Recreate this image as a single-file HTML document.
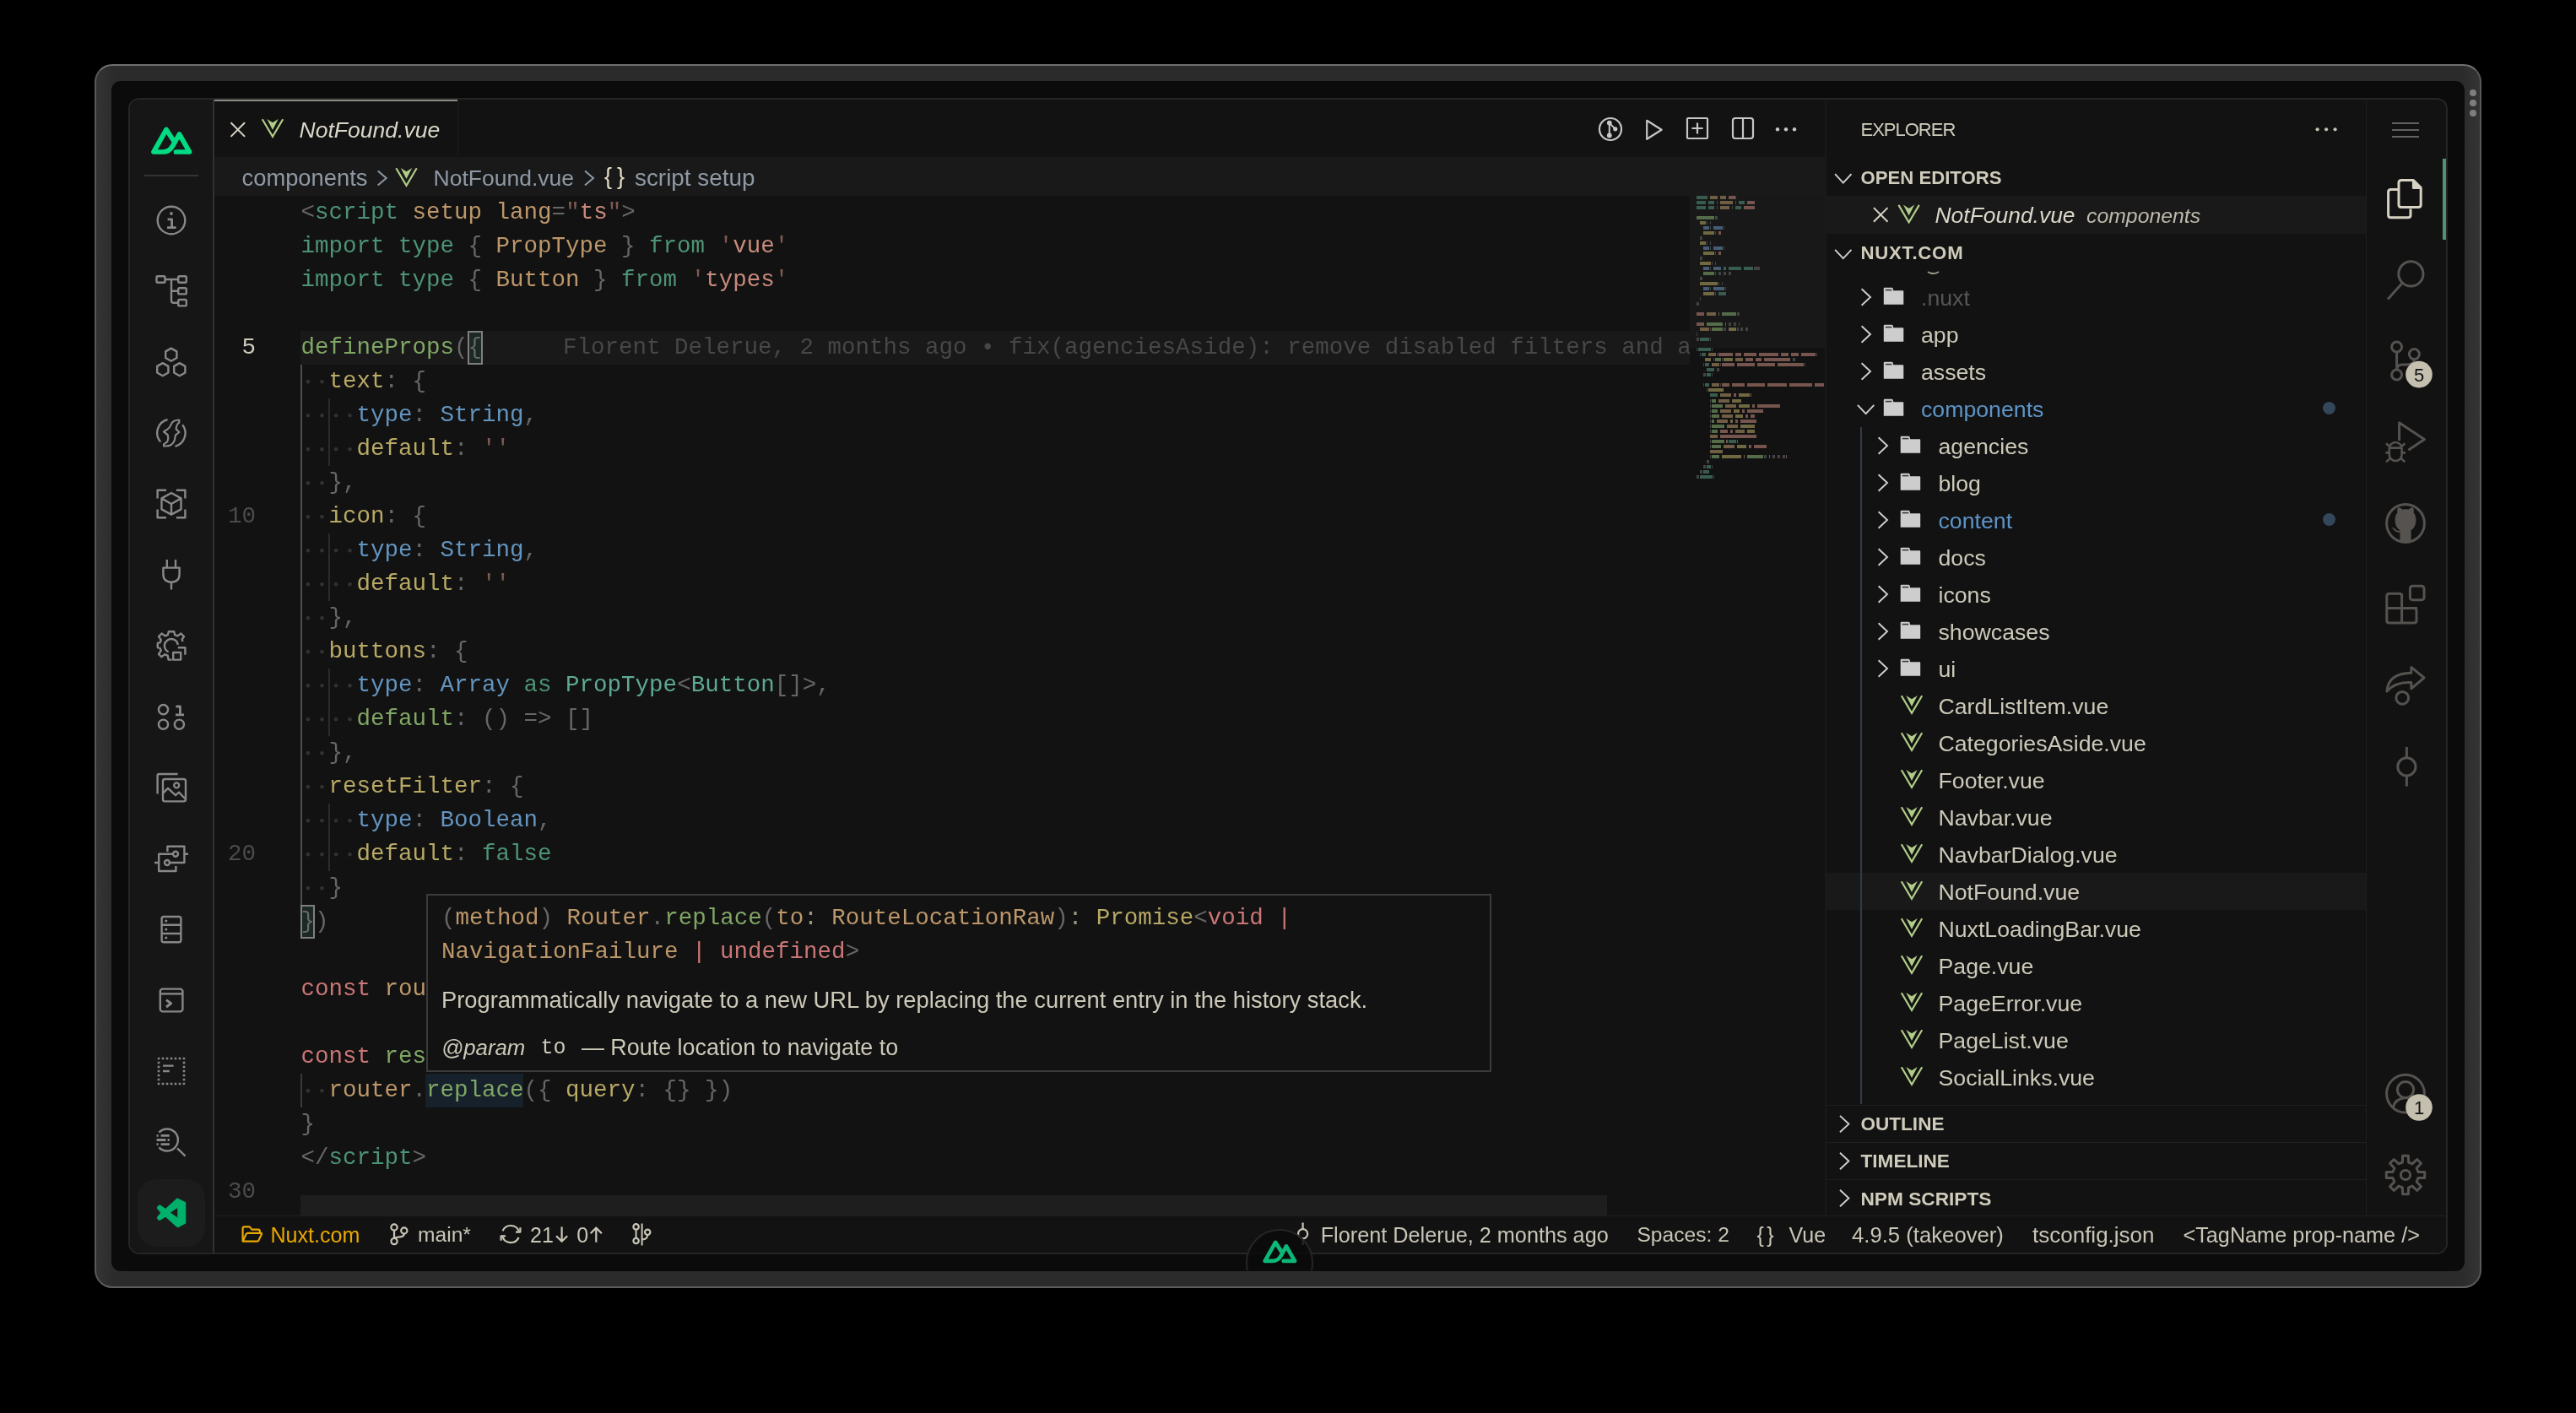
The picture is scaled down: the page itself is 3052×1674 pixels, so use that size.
<!DOCTYPE html><html><head><meta charset="utf-8"><title>NotFound.vue</title><style>
*{box-sizing:border-box;margin:0;padding:0}
html,body{width:3052px;height:1674px;background:#000;overflow:hidden}
body{position:relative;font-family:"Liberation Sans",sans-serif;color:#cdc9b9}
.abs{position:absolute}
.t{position:absolute;white-space:pre;line-height:40px;height:40px}
.m{font-family:"Liberation Mono",monospace;font-size:27.5px}
#bezel{position:absolute;left:112px;top:76px;width:2828px;height:1450px;border-radius:21px;border:2px solid #585858;border-top-color:#707070;border-bottom-color:#5e5e5e;
 background:linear-gradient(90deg,#343434 0,#2b2b2b 22px,#2b2b2b 2802px,#343434 2824px)}
#screen{position:absolute;left:132px;top:96px;width:2788px;height:1410px;border-radius:11px;background:#0b0b0b;overflow:hidden}
#win{position:absolute;left:152px;top:116px;width:2748px;height:1370px;border-radius:13px;background:#121212;overflow:hidden;border:2px solid #252525}
#pg{position:absolute;left:-154px;top:-118px;width:3052px;height:1674px;will-change:transform}
.cl{position:absolute;left:356.5px;height:40px;line-height:40px;white-space:pre;font-family:"Liberation Mono",monospace;font-size:27.5px}
.ln{position:absolute;left:254px;width:49px;text-align:right;height:40px;line-height:40px;font-family:"Liberation Mono",monospace;font-size:27.5px;color:#4a4a4a}
.d{display:inline-block;width:16.5px;height:40px;vertical-align:top;background:radial-gradient(circle at 50% 50.5%,#313131 0,#313131 1.9px,rgba(49,49,49,0) 2.7px)}
.row{position:absolute;left:2164px;width:639px;height:44px}
.rt{position:absolute;white-space:pre;height:44px;line-height:44px;font-size:26.7px;color:#cdc9b9;margin-top:1px}
.hd{position:absolute;white-space:pre;height:44px;line-height:44px;font-size:22.4px;font-weight:bold;color:#d0ccbc}
.sb{position:absolute;white-space:pre;top:1441px;height:44px;line-height:44px;color:#c9c5b6}
</style></head><body>
<div id="bezel"></div><div id="screen"></div>
<div class="abs" style="left:2926px;top:106px;width:8px;height:8px;border-radius:4px;background:#7d7d7d"></div>
<div class="abs" style="left:2926px;top:118px;width:8px;height:8px;border-radius:4px;background:#7d7d7d"></div>
<div class="abs" style="left:2926px;top:130px;width:8px;height:8px;border-radius:4px;background:#7d7d7d"></div>
<div id="win"><div id="pg">
<div class="abs" style="left:152px;top:116px;width:100px;height:1370px;background:#161616"></div>
<div class="abs" style="left:252px;top:116px;width:2px;height:1370px;background:#2f3133"></div>
<div class="abs" style="left:171px;top:207px;width:64px;height:2px;background:#333"></div>
<div class="abs" style="left:163px;top:1397px;width:80px;height:80px;border-radius:22px;background:#1c1c1c"></div>
<div class="abs" style="left:254px;top:118px;width:289px;height:2px;background:#8b8b83"></div>
<div class="abs" style="left:542px;top:118px;width:1px;height:68px;background:#1d1d1d"></div>
<div class="t" style="left:354.5px;top:134px;font-size:26.55px;font-style:italic;color:#dad6c8">NotFound.vue</div>
<div class="abs" style="left:254px;top:186px;width:1909px;height:46px;background:#191919"></div>
<div class="t" style="left:286.5px;top:191px;font-size:27.35px;color:#8f99a4">components</div>
<div class="t" style="left:513.5px;top:191px;font-size:26.5px;color:#8f99a4">NotFound.vue</div>
<div class="t" style="left:716px;top:189px;font-size:27px;color:#e2dcc4;letter-spacing:6px">{}</div>
<div class="t" style="left:752px;top:191px;font-size:27.87px;color:#8f99a4">script setup</div>
<div class="abs" style="left:356px;top:392px;width:1646px;height:40px;background:#191919"></div>
<div class="abs" style="left:504px;top:1272px;width:116px;height:40px;background:#16212b"></div>
<div class="abs" style="left:356px;top:432px;width:2px;height:640px;background:#4e4e4e"></div>
<div class="abs" style="left:356px;top:1272px;width:2px;height:40px;background:#3a3a3a"></div>
<div class="abs" style="left:389px;top:472px;width:2px;height:80px;background:#2b2b2b"></div>
<div class="abs" style="left:389px;top:632px;width:2px;height:80px;background:#2b2b2b"></div>
<div class="abs" style="left:389px;top:792px;width:2px;height:80px;background:#2b2b2b"></div>
<div class="abs" style="left:389px;top:952px;width:2px;height:80px;background:#2b2b2b"></div>
<div class="abs" style="left:554px;top:392px;width:18px;height:40px;background:#1b2824;border:2px solid #7f7f7f"></div>
<div class="abs" style="left:356px;top:1072px;width:17px;height:40px;background:#1b2824;border:2px solid #7f7f7f"></div>
<div class="cl" style="top:232px"><span style="color:#666666">&lt;</span><span style="color:#4d9375">script</span> <span style="color:#bd976a">setup</span> <span style="color:#bd976a">lang</span><span style="color:#666666">=</span><span style="color:#7d5a52">"</span><span style="color:#c98a7d">ts</span><span style="color:#7d5a52">"</span><span style="color:#666666">&gt;</span></div>
<div class="cl" style="top:272px"><span style="color:#4d9375">import type</span><span style="color:#666666"> { </span><span style="color:#bd976a">PropType</span><span style="color:#666666"> } </span><span style="color:#4d9375">from</span> <span style="color:#7d5a52">'</span><span style="color:#c98a7d">vue</span><span style="color:#7d5a52">'</span></div>
<div class="cl" style="top:312px"><span style="color:#4d9375">import type</span><span style="color:#666666"> { </span><span style="color:#bd976a">Button</span><span style="color:#666666"> } </span><span style="color:#4d9375">from</span> <span style="color:#7d5a52">'</span><span style="color:#c98a7d">types</span><span style="color:#7d5a52">'</span></div>
<div class="cl" style="top:392px"><span style="color:#80a665">defineProps</span><span style="color:#666666">({</span></div>
<div class="cl" style="top:432px"><span class="d"></span><span class="d"></span><span style="color:#b8a965">text</span><span style="color:#666666">: {</span></div>
<div class="cl" style="top:472px"><span class="d"></span><span class="d"></span><span class="d"></span><span class="d"></span><span style="color:#6394bf">type</span><span style="color:#666666">: </span><span style="color:#6394bf">String</span><span style="color:#666666">,</span></div>
<div class="cl" style="top:512px"><span class="d"></span><span class="d"></span><span class="d"></span><span class="d"></span><span style="color:#b8a965">default</span><span style="color:#666666">: </span><span style="color:#7d5a52">''</span></div>
<div class="cl" style="top:552px"><span class="d"></span><span class="d"></span><span style="color:#666666">},</span></div>
<div class="cl" style="top:592px"><span class="d"></span><span class="d"></span><span style="color:#b8a965">icon</span><span style="color:#666666">: {</span></div>
<div class="cl" style="top:632px"><span class="d"></span><span class="d"></span><span class="d"></span><span class="d"></span><span style="color:#6394bf">type</span><span style="color:#666666">: </span><span style="color:#6394bf">String</span><span style="color:#666666">,</span></div>
<div class="cl" style="top:672px"><span class="d"></span><span class="d"></span><span class="d"></span><span class="d"></span><span style="color:#b8a965">default</span><span style="color:#666666">: </span><span style="color:#7d5a52">''</span></div>
<div class="cl" style="top:712px"><span class="d"></span><span class="d"></span><span style="color:#666666">},</span></div>
<div class="cl" style="top:752px"><span class="d"></span><span class="d"></span><span style="color:#b8a965">buttons</span><span style="color:#666666">: {</span></div>
<div class="cl" style="top:792px"><span class="d"></span><span class="d"></span><span class="d"></span><span class="d"></span><span style="color:#6394bf">type</span><span style="color:#666666">: </span><span style="color:#6394bf">Array</span> <span style="color:#4d9375">as</span> <span style="color:#5da994">PropType</span><span style="color:#666666">&lt;</span><span style="color:#5da994">Button</span><span style="color:#666666">[]&gt;,</span></div>
<div class="cl" style="top:832px"><span class="d"></span><span class="d"></span><span class="d"></span><span class="d"></span><span style="color:#80a665">default</span><span style="color:#666666">: () =&gt; []</span></div>
<div class="cl" style="top:872px"><span class="d"></span><span class="d"></span><span style="color:#666666">},</span></div>
<div class="cl" style="top:912px"><span class="d"></span><span class="d"></span><span style="color:#b8a965">resetFilter</span><span style="color:#666666">: {</span></div>
<div class="cl" style="top:952px"><span class="d"></span><span class="d"></span><span class="d"></span><span class="d"></span><span style="color:#6394bf">type</span><span style="color:#666666">: </span><span style="color:#6394bf">Boolean</span><span style="color:#666666">,</span></div>
<div class="cl" style="top:992px"><span class="d"></span><span class="d"></span><span class="d"></span><span class="d"></span><span style="color:#b8a965">default</span><span style="color:#666666">: </span><span style="color:#4d9375">false</span></div>
<div class="cl" style="top:1032px"><span class="d"></span><span class="d"></span><span style="color:#666666">}</span></div>
<div class="cl" style="top:1072px"><span style="color:#666666">})</span></div>
<div class="cl" style="top:1152px"><span style="color:#cb7676">const</span> <span style="color:#bd976a">router</span><span style="color:#666666"> = </span><span style="color:#80a665">useRouter</span><span style="color:#666666">()</span></div>
<div class="cl" style="top:1232px"><span style="color:#cb7676">const</span> <span style="color:#80a665">resetFilter</span><span style="color:#666666"> = () =&gt; {</span></div>
<div class="cl" style="top:1272px"><span class="d"></span><span class="d"></span><span style="color:#bd976a">router</span><span style="color:#666666">.</span><span style="color:#80a665">replace</span><span style="color:#666666">({ </span><span style="color:#b8a965">query</span><span style="color:#666666">: {} })</span></div>
<div class="cl" style="top:1312px"><span style="color:#666666">}</span></div>
<div class="cl" style="top:1352px"><span style="color:#666666">&lt;/</span><span style="color:#4d9375">script</span><span style="color:#666666">&gt;</span></div>
<div class="cl" style="top:392px;left:667px;width:1335px;overflow:hidden;color:#474747">Florent Delerue, 2 months ago • fix(agenciesAside): remove disabled filters and agencies</div>
<div class="ln" style="top:392px;color:#cfcbbc">5</div>
<div class="ln" style="top:592px;color:#4b4b4b">10</div>
<div class="ln" style="top:992px;color:#4b4b4b">20</div>
<div class="ln" style="top:1392px;color:#4b4b4b">30</div>
<div class="abs" style="left:356px;top:1416px;width:1548px;height:25px;background:#1e1e1e"></div>
<div class="abs" style="left:2002px;top:232px;width:161px;height:1209px;background:#121212"></div>
<div class="abs" style="left:2002px;top:232px;width:161px;height:180px;background:#181818"></div>
<div class="abs" style="left:2010.1px;top:231.6px;width:13.3px;height:4px;background:#385c4e"></div>
<div class="abs" style="left:2025.8px;top:231.6px;width:9.3px;height:4px;background:#705e44"></div>
<div class="abs" style="left:2037.6px;top:231.6px;width:7.8px;height:4px;background:#705e44"></div>
<div class="abs" style="left:2047.5px;top:231.6px;width:8.3px;height:4px;background:#75554e"></div>
<div class="abs" style="left:2056.4px;top:231.6px;width:1.0px;height:4px;background:#434343"></div>
<div class="abs" style="left:2010.1px;top:237.6px;width:11.2px;height:4px;background:#385c4e"></div>
<div class="abs" style="left:2024.0px;top:237.6px;width:7.3px;height:4px;background:#385c4e"></div>
<div class="abs" style="left:2033.9px;top:237.6px;width:1.0px;height:4px;background:#434343"></div>
<div class="abs" style="left:2037.9px;top:237.6px;width:15.6px;height:4px;background:#705e44"></div>
<div class="abs" style="left:2056.2px;top:237.6px;width:1.0px;height:4px;background:#434343"></div>
<div class="abs" style="left:2059.8px;top:237.6px;width:7.5px;height:4px;background:#385c4e"></div>
<div class="abs" style="left:2069.8px;top:237.6px;width:9.6px;height:4px;background:#75554e"></div>
<div class="abs" style="left:2010.1px;top:243.7px;width:11.2px;height:4px;background:#385c4e"></div>
<div class="abs" style="left:2024.0px;top:243.7px;width:7.3px;height:4px;background:#385c4e"></div>
<div class="abs" style="left:2033.9px;top:243.7px;width:1.0px;height:4px;background:#434343"></div>
<div class="abs" style="left:2037.9px;top:243.7px;width:11.4px;height:4px;background:#705e44"></div>
<div class="abs" style="left:2052.0px;top:243.7px;width:1.0px;height:4px;background:#434343"></div>
<div class="abs" style="left:2055.9px;top:243.7px;width:7.3px;height:4px;background:#385c4e"></div>
<div class="abs" style="left:2065.9px;top:243.7px;width:13.5px;height:4px;background:#75554e"></div>
<div class="abs" style="left:2010.1px;top:255.7px;width:21.1px;height:4px;background:#546c48"></div>
<div class="abs" style="left:2031.8px;top:255.7px;width:3.1px;height:4px;background:#434343"></div>
<div class="abs" style="left:2014.0px;top:261.7px;width:7.3px;height:4px;background:#706840"></div>
<div class="abs" style="left:2021.9px;top:261.7px;width:1.5px;height:4px;background:#434343"></div>
<div class="abs" style="left:2025.8px;top:261.7px;width:1.5px;height:4px;background:#434343"></div>
<div class="abs" style="left:2018.0px;top:267.7px;width:7.3px;height:4px;background:#465c74"></div>
<div class="abs" style="left:2025.8px;top:267.7px;width:1.5px;height:4px;background:#434343"></div>
<div class="abs" style="left:2029.7px;top:267.7px;width:11.7px;height:4px;background:#465c74"></div>
<div class="abs" style="left:2042.0px;top:267.7px;width:1.2px;height:4px;background:#434343"></div>
<div class="abs" style="left:2018.0px;top:273.8px;width:13.3px;height:4px;background:#706840"></div>
<div class="abs" style="left:2031.8px;top:273.8px;width:1.5px;height:4px;background:#434343"></div>
<div class="abs" style="left:2035.8px;top:273.8px;width:3.6px;height:4px;background:#75554e"></div>
<div class="abs" style="left:2014.0px;top:279.8px;width:3.3px;height:4px;background:#434343"></div>
<div class="abs" style="left:2014.0px;top:285.8px;width:7.3px;height:4px;background:#706840"></div>
<div class="abs" style="left:2021.9px;top:285.8px;width:1.5px;height:4px;background:#434343"></div>
<div class="abs" style="left:2025.8px;top:285.8px;width:1.5px;height:4px;background:#434343"></div>
<div class="abs" style="left:2018.0px;top:291.8px;width:7.3px;height:4px;background:#465c74"></div>
<div class="abs" style="left:2025.8px;top:291.8px;width:1.5px;height:4px;background:#434343"></div>
<div class="abs" style="left:2029.7px;top:291.8px;width:11.7px;height:4px;background:#465c74"></div>
<div class="abs" style="left:2042.0px;top:291.8px;width:1.2px;height:4px;background:#434343"></div>
<div class="abs" style="left:2018.0px;top:297.8px;width:13.3px;height:4px;background:#706840"></div>
<div class="abs" style="left:2031.8px;top:297.8px;width:1.5px;height:4px;background:#434343"></div>
<div class="abs" style="left:2035.8px;top:297.8px;width:3.6px;height:4px;background:#75554e"></div>
<div class="abs" style="left:2014.0px;top:303.9px;width:3.3px;height:4px;background:#434343"></div>
<div class="abs" style="left:2014.0px;top:309.9px;width:13.3px;height:4px;background:#706840"></div>
<div class="abs" style="left:2027.9px;top:309.9px;width:1.5px;height:4px;background:#434343"></div>
<div class="abs" style="left:2031.8px;top:309.9px;width:1.5px;height:4px;background:#434343"></div>
<div class="abs" style="left:2018.0px;top:315.9px;width:7.3px;height:4px;background:#465c74"></div>
<div class="abs" style="left:2025.8px;top:315.9px;width:1.5px;height:4px;background:#434343"></div>
<div class="abs" style="left:2029.7px;top:315.9px;width:9.6px;height:4px;background:#465c74"></div>
<div class="abs" style="left:2042.0px;top:315.9px;width:3.3px;height:4px;background:#385c4e"></div>
<div class="abs" style="left:2047.8px;top:315.9px;width:15.6px;height:4px;background:#385c4e"></div>
<div class="abs" style="left:2065.9px;top:315.9px;width:11.4px;height:4px;background:#385c4e"></div>
<div class="abs" style="left:2077.9px;top:315.9px;width:7.5px;height:4px;background:#434343"></div>
<div class="abs" style="left:2018.0px;top:321.9px;width:13.3px;height:4px;background:#546c48"></div>
<div class="abs" style="left:2031.8px;top:321.9px;width:1.5px;height:4px;background:#434343"></div>
<div class="abs" style="left:2035.8px;top:321.9px;width:3.6px;height:4px;background:#434343"></div>
<div class="abs" style="left:2042.0px;top:321.9px;width:3.3px;height:4px;background:#434343"></div>
<div class="abs" style="left:2047.8px;top:321.9px;width:3.6px;height:4px;background:#434343"></div>
<div class="abs" style="left:2014.0px;top:327.9px;width:3.3px;height:4px;background:#434343"></div>
<div class="abs" style="left:2014.0px;top:334.0px;width:21.1px;height:4px;background:#706840"></div>
<div class="abs" style="left:2035.8px;top:334.0px;width:1.5px;height:4px;background:#434343"></div>
<div class="abs" style="left:2039.9px;top:334.0px;width:1.5px;height:4px;background:#434343"></div>
<div class="abs" style="left:2018.0px;top:340.0px;width:7.3px;height:4px;background:#465c74"></div>
<div class="abs" style="left:2025.8px;top:340.0px;width:1.5px;height:4px;background:#434343"></div>
<div class="abs" style="left:2029.7px;top:340.0px;width:13.5px;height:4px;background:#465c74"></div>
<div class="abs" style="left:2043.9px;top:340.0px;width:1.5px;height:4px;background:#434343"></div>
<div class="abs" style="left:2018.0px;top:346.0px;width:13.3px;height:4px;background:#706840"></div>
<div class="abs" style="left:2031.8px;top:346.0px;width:1.5px;height:4px;background:#434343"></div>
<div class="abs" style="left:2035.8px;top:346.0px;width:9.6px;height:4px;background:#385c4e"></div>
<div class="abs" style="left:2014.0px;top:352.0px;width:1.2px;height:4px;background:#434343"></div>
<div class="abs" style="left:2010.1px;top:358.1px;width:3.3px;height:4px;background:#434343"></div>
<div class="abs" style="left:2010.1px;top:370.1px;width:9.1px;height:4px;background:#75554e"></div>
<div class="abs" style="left:2021.9px;top:370.1px;width:11.4px;height:4px;background:#705e44"></div>
<div class="abs" style="left:2035.8px;top:370.1px;width:1.5px;height:4px;background:#75554e"></div>
<div class="abs" style="left:2039.9px;top:370.1px;width:17.5px;height:4px;background:#546c48"></div>
<div class="abs" style="left:2058.0px;top:370.1px;width:3.3px;height:4px;background:#434343"></div>
<div class="abs" style="left:2010.1px;top:382.1px;width:9.1px;height:4px;background:#75554e"></div>
<div class="abs" style="left:2021.9px;top:382.1px;width:19.6px;height:4px;background:#546c48"></div>
<div class="abs" style="left:2043.9px;top:382.1px;width:1.5px;height:4px;background:#75554e"></div>
<div class="abs" style="left:2047.8px;top:382.1px;width:3.6px;height:4px;background:#434343"></div>
<div class="abs" style="left:2053.8px;top:382.1px;width:3.6px;height:4px;background:#434343"></div>
<div class="abs" style="left:2059.8px;top:382.1px;width:1.5px;height:4px;background:#434343"></div>
<div class="abs" style="left:2014.0px;top:388.2px;width:11.2px;height:4px;background:#705e44"></div>
<div class="abs" style="left:2025.8px;top:388.2px;width:1.5px;height:4px;background:#434343"></div>
<div class="abs" style="left:2027.9px;top:388.2px;width:13.5px;height:4px;background:#546c48"></div>
<div class="abs" style="left:2042.0px;top:388.2px;width:3.3px;height:4px;background:#434343"></div>
<div class="abs" style="left:2047.8px;top:388.2px;width:9.6px;height:4px;background:#706840"></div>
<div class="abs" style="left:2058.0px;top:388.2px;width:1.5px;height:4px;background:#434343"></div>
<div class="abs" style="left:2061.9px;top:388.2px;width:3.3px;height:4px;background:#434343"></div>
<div class="abs" style="left:2068.0px;top:388.2px;width:3.3px;height:4px;background:#434343"></div>
<div class="abs" style="left:2010.1px;top:394.2px;width:1.2px;height:4px;background:#434343"></div>
<div class="abs" style="left:2010.1px;top:400.2px;width:3.3px;height:4px;background:#434343"></div>
<div class="abs" style="left:2014.0px;top:400.2px;width:11.2px;height:4px;background:#385c4e"></div>
<div class="abs" style="left:2025.8px;top:400.2px;width:1.5px;height:4px;background:#434343"></div>
<div class="abs" style="left:2010.1px;top:412.2px;width:1.2px;height:4px;background:#434343"></div>
<div class="abs" style="left:2011.9px;top:412.2px;width:15.4px;height:4px;background:#385c4e"></div>
<div class="abs" style="left:2027.9px;top:412.2px;width:1.2px;height:4px;background:#434343"></div>
<div class="abs" style="left:2014.0px;top:418.3px;width:1.2px;height:4px;background:#434343"></div>
<div class="abs" style="left:2015.9px;top:418.3px;width:5.4px;height:4px;background:#385c4e"></div>
<div class="abs" style="left:2024.0px;top:418.3px;width:9.3px;height:4px;background:#705e44"></div>
<div class="abs" style="left:2033.9px;top:418.3px;width:1.2px;height:4px;background:#434343"></div>
<div class="abs" style="left:2035.8px;top:418.3px;width:17.7px;height:4px;background:#75554e"></div>
<div class="abs" style="left:2055.9px;top:418.3px;width:7.3px;height:4px;background:#75554e"></div>
<div class="abs" style="left:2065.9px;top:418.3px;width:15.4px;height:4px;background:#75554e"></div>
<div class="abs" style="left:2083.9px;top:418.3px;width:23.5px;height:4px;background:#75554e"></div>
<div class="abs" style="left:2110.1px;top:418.3px;width:9.3px;height:4px;background:#75554e"></div>
<div class="abs" style="left:2122.1px;top:418.3px;width:9.1px;height:4px;background:#75554e"></div>
<div class="abs" style="left:2133.9px;top:418.3px;width:17.5px;height:4px;background:#75554e"></div>
<div class="abs" style="left:2152.0px;top:418.3px;width:1.2px;height:4px;background:#434343"></div>
<div class="abs" style="left:2019.8px;top:424.3px;width:7.5px;height:4px;background:#706840"></div>
<div class="abs" style="left:2029.7px;top:424.3px;width:1.5px;height:4px;background:#434343"></div>
<div class="abs" style="left:2031.8px;top:424.3px;width:7.5px;height:4px;background:#546c48"></div>
<div class="abs" style="left:2039.9px;top:424.3px;width:1.5px;height:4px;background:#434343"></div>
<div class="abs" style="left:2042.0px;top:424.3px;width:11.4px;height:4px;background:#706840"></div>
<div class="abs" style="left:2055.9px;top:424.3px;width:9.3px;height:4px;background:#705e44"></div>
<div class="abs" style="left:2068.0px;top:424.3px;width:9.3px;height:4px;background:#75554e"></div>
<div class="abs" style="left:2080.0px;top:424.3px;width:7.3px;height:4px;background:#75554e"></div>
<div class="abs" style="left:2089.9px;top:424.3px;width:31.6px;height:4px;background:#75554e"></div>
<div class="abs" style="left:2124.0px;top:424.3px;width:3.3px;height:4px;background:#434343"></div>
<div class="abs" style="left:2018.0px;top:430.3px;width:1.2px;height:4px;background:#434343"></div>
<div class="abs" style="left:2019.8px;top:430.3px;width:5.4px;height:4px;background:#385c4e"></div>
<div class="abs" style="left:2027.9px;top:430.3px;width:9.3px;height:4px;background:#705e44"></div>
<div class="abs" style="left:2037.9px;top:430.3px;width:1.5px;height:4px;background:#434343"></div>
<div class="abs" style="left:2039.9px;top:430.3px;width:15.4px;height:4px;background:#75554e"></div>
<div class="abs" style="left:2058.0px;top:430.3px;width:21.4px;height:4px;background:#75554e"></div>
<div class="abs" style="left:2081.8px;top:430.3px;width:21.7px;height:4px;background:#75554e"></div>
<div class="abs" style="left:2105.9px;top:430.3px;width:31.3px;height:4px;background:#75554e"></div>
<div class="abs" style="left:2137.9px;top:430.3px;width:1.2px;height:4px;background:#434343"></div>
<div class="abs" style="left:2021.9px;top:436.3px;width:9.3px;height:4px;background:#385c4e"></div>
<div class="abs" style="left:2033.9px;top:436.3px;width:3.3px;height:4px;background:#434343"></div>
<div class="abs" style="left:2018.0px;top:442.3px;width:3.3px;height:4px;background:#434343"></div>
<div class="abs" style="left:2021.9px;top:442.3px;width:5.4px;height:4px;background:#385c4e"></div>
<div class="abs" style="left:2027.9px;top:442.3px;width:1.2px;height:4px;background:#434343"></div>
<div class="abs" style="left:2018.0px;top:454.4px;width:1.2px;height:4px;background:#434343"></div>
<div class="abs" style="left:2019.8px;top:454.4px;width:5.4px;height:4px;background:#385c4e"></div>
<div class="abs" style="left:2027.9px;top:454.4px;width:9.3px;height:4px;background:#705e44"></div>
<div class="abs" style="left:2037.9px;top:454.4px;width:1.5px;height:4px;background:#434343"></div>
<div class="abs" style="left:2039.9px;top:454.4px;width:9.3px;height:4px;background:#75554e"></div>
<div class="abs" style="left:2052.0px;top:454.4px;width:15.4px;height:4px;background:#75554e"></div>
<div class="abs" style="left:2069.8px;top:454.4px;width:21.7px;height:4px;background:#75554e"></div>
<div class="abs" style="left:2093.9px;top:454.4px;width:23.5px;height:4px;background:#75554e"></div>
<div class="abs" style="left:2120.1px;top:454.4px;width:27.1px;height:4px;background:#75554e"></div>
<div class="abs" style="left:2149.9px;top:454.4px;width:11.4px;height:4px;background:#75554e"></div>
<div class="abs" style="left:2021.9px;top:460.4px;width:1.5px;height:4px;background:#434343"></div>
<div class="abs" style="left:2024.0px;top:460.4px;width:17.5px;height:4px;background:#706840"></div>
<div class="abs" style="left:2025.8px;top:466.4px;width:9.3px;height:4px;background:#385c4e"></div>
<div class="abs" style="left:2037.9px;top:466.4px;width:13.5px;height:4px;background:#705e44"></div>
<div class="abs" style="left:2053.8px;top:466.4px;width:3.6px;height:4px;background:#75554e"></div>
<div class="abs" style="left:2059.8px;top:466.4px;width:13.5px;height:4px;background:#706840"></div>
<div class="abs" style="left:2074.0px;top:466.4px;width:1.2px;height:4px;background:#75554e"></div>
<div class="abs" style="left:2025.8px;top:472.5px;width:1.5px;height:4px;background:#434343"></div>
<div class="abs" style="left:2027.9px;top:472.5px;width:5.4px;height:4px;background:#546c48"></div>
<div class="abs" style="left:2035.8px;top:472.5px;width:13.5px;height:4px;background:#705e44"></div>
<div class="abs" style="left:2052.0px;top:472.5px;width:11.2px;height:4px;background:#706840"></div>
<div class="abs" style="left:2025.8px;top:478.5px;width:1.5px;height:4px;background:#434343"></div>
<div class="abs" style="left:2027.9px;top:478.5px;width:13.5px;height:4px;background:#546c48"></div>
<div class="abs" style="left:2043.9px;top:478.5px;width:13.5px;height:4px;background:#705e44"></div>
<div class="abs" style="left:2059.8px;top:478.5px;width:13.5px;height:4px;background:#706840"></div>
<div class="abs" style="left:2075.8px;top:478.5px;width:3.6px;height:4px;background:#75554e"></div>
<div class="abs" style="left:2081.8px;top:478.5px;width:27.7px;height:4px;background:#75554e"></div>
<div class="abs" style="left:2025.8px;top:484.5px;width:1.5px;height:4px;background:#434343"></div>
<div class="abs" style="left:2027.9px;top:484.5px;width:7.3px;height:4px;background:#546c48"></div>
<div class="abs" style="left:2037.9px;top:484.5px;width:13.5px;height:4px;background:#705e44"></div>
<div class="abs" style="left:2053.8px;top:484.5px;width:7.5px;height:4px;background:#706840"></div>
<div class="abs" style="left:2063.8px;top:484.5px;width:3.6px;height:4px;background:#75554e"></div>
<div class="abs" style="left:2069.8px;top:484.5px;width:19.6px;height:4px;background:#75554e"></div>
<div class="abs" style="left:2025.8px;top:490.5px;width:1.5px;height:4px;background:#434343"></div>
<div class="abs" style="left:2027.9px;top:490.5px;width:9.3px;height:4px;background:#546c48"></div>
<div class="abs" style="left:2039.9px;top:490.5px;width:13.5px;height:4px;background:#705e44"></div>
<div class="abs" style="left:2055.9px;top:490.5px;width:9.3px;height:4px;background:#706840"></div>
<div class="abs" style="left:2068.0px;top:490.5px;width:3.3px;height:4px;background:#75554e"></div>
<div class="abs" style="left:2074.0px;top:490.5px;width:5.4px;height:4px;background:#75554e"></div>
<div class="abs" style="left:2025.8px;top:496.5px;width:1.5px;height:4px;background:#434343"></div>
<div class="abs" style="left:2027.9px;top:496.5px;width:3.3px;height:4px;background:#546c48"></div>
<div class="abs" style="left:2033.9px;top:496.5px;width:13.5px;height:4px;background:#705e44"></div>
<div class="abs" style="left:2049.9px;top:496.5px;width:3.6px;height:4px;background:#706840"></div>
<div class="abs" style="left:2055.9px;top:496.5px;width:3.3px;height:4px;background:#75554e"></div>
<div class="abs" style="left:2061.9px;top:496.5px;width:19.3px;height:4px;background:#75554e"></div>
<div class="abs" style="left:2025.8px;top:502.6px;width:1.5px;height:4px;background:#434343"></div>
<div class="abs" style="left:2027.9px;top:502.6px;width:15.4px;height:4px;background:#546c48"></div>
<div class="abs" style="left:2046.0px;top:502.6px;width:13.3px;height:4px;background:#705e44"></div>
<div class="abs" style="left:2061.9px;top:502.6px;width:17.5px;height:4px;background:#706840"></div>
<div class="abs" style="left:2025.8px;top:508.6px;width:1.5px;height:4px;background:#434343"></div>
<div class="abs" style="left:2027.9px;top:508.6px;width:7.3px;height:4px;background:#546c48"></div>
<div class="abs" style="left:2037.9px;top:508.6px;width:9.6px;height:4px;background:#75554e"></div>
<div class="abs" style="left:2049.9px;top:508.6px;width:3.6px;height:4px;background:#75554e"></div>
<div class="abs" style="left:2055.9px;top:508.6px;width:11.4px;height:4px;background:#705e44"></div>
<div class="abs" style="left:2069.8px;top:508.6px;width:9.6px;height:4px;background:#706840"></div>
<div class="abs" style="left:2025.8px;top:514.6px;width:9.3px;height:4px;background:#705e44"></div>
<div class="abs" style="left:2037.9px;top:514.6px;width:43.4px;height:4px;background:#75554e"></div>
<div class="abs" style="left:2025.8px;top:520.6px;width:1.5px;height:4px;background:#434343"></div>
<div class="abs" style="left:2027.9px;top:520.6px;width:15.4px;height:4px;background:#546c48"></div>
<div class="abs" style="left:2045.4px;top:520.6px;width:1.5px;height:4px;background:#75554e"></div>
<div class="abs" style="left:2048.1px;top:520.6px;width:9.3px;height:4px;background:#385c4e"></div>
<div class="abs" style="left:2058.0px;top:520.6px;width:1.2px;height:4px;background:#75554e"></div>
<div class="abs" style="left:2025.8px;top:526.6px;width:1.5px;height:4px;background:#434343"></div>
<div class="abs" style="left:2027.9px;top:526.6px;width:11.4px;height:4px;background:#546c48"></div>
<div class="abs" style="left:2042.0px;top:526.6px;width:13.3px;height:4px;background:#705e44"></div>
<div class="abs" style="left:2058.0px;top:526.6px;width:11.2px;height:4px;background:#706840"></div>
<div class="abs" style="left:2071.9px;top:526.6px;width:3.3px;height:4px;background:#75554e"></div>
<div class="abs" style="left:2077.9px;top:526.6px;width:15.4px;height:4px;background:#75554e"></div>
<div class="abs" style="left:2025.8px;top:532.7px;width:15.6px;height:4px;background:#705e44"></div>
<div class="abs" style="left:2025.8px;top:538.7px;width:1.5px;height:4px;background:#434343"></div>
<div class="abs" style="left:2027.9px;top:538.7px;width:9.3px;height:4px;background:#546c48"></div>
<div class="abs" style="left:2039.9px;top:538.7px;width:23.5px;height:4px;background:#706840"></div>
<div class="abs" style="left:2065.9px;top:538.7px;width:1.5px;height:4px;background:#75554e"></div>
<div class="abs" style="left:2069.8px;top:538.7px;width:19.6px;height:4px;background:#546c48"></div>
<div class="abs" style="left:2089.9px;top:538.7px;width:3.3px;height:4px;background:#434343"></div>
<div class="abs" style="left:2096.0px;top:538.7px;width:1.2px;height:4px;background:#75554e"></div>
<div class="abs" style="left:2099.9px;top:538.7px;width:3.6px;height:4px;background:#434343"></div>
<div class="abs" style="left:2105.9px;top:538.7px;width:3.6px;height:4px;background:#434343"></div>
<div class="abs" style="left:2111.9px;top:538.7px;width:3.6px;height:4px;background:#434343"></div>
<div class="abs" style="left:2116.1px;top:538.7px;width:1.2px;height:4px;background:#75554e"></div>
<div class="abs" style="left:2021.9px;top:544.7px;width:3.3px;height:4px;background:#434343"></div>
<div class="abs" style="left:2018.0px;top:550.7px;width:3.3px;height:4px;background:#434343"></div>
<div class="abs" style="left:2021.9px;top:550.7px;width:5.4px;height:4px;background:#385c4e"></div>
<div class="abs" style="left:2027.9px;top:550.7px;width:1.2px;height:4px;background:#434343"></div>
<div class="abs" style="left:2014.0px;top:556.7px;width:3.3px;height:4px;background:#434343"></div>
<div class="abs" style="left:2018.0px;top:556.7px;width:7.3px;height:4px;background:#385c4e"></div>
<div class="abs" style="left:2010.1px;top:562.8px;width:3.3px;height:4px;background:#434343"></div>
<div class="abs" style="left:2014.0px;top:562.8px;width:15.1px;height:4px;background:#385c4e"></div>
<div class="abs" style="left:2029.7px;top:562.8px;width:1.5px;height:4px;background:#434343"></div>
<div class="abs" style="left:505px;top:1059px;width:1262px;height:211px;background:#121212;border:2px solid #3b3b3b"></div>
<div class="cl" style="left:523px;top:1068px"><span style="color:#666666">(</span><span style="color:#bd976a">method</span><span style="color:#666666">)</span> <span style="color:#bd976a">Router</span><span style="color:#666666">.</span><span style="color:#80a665">replace</span><span style="color:#666666">(</span><span style="color:#bd976a">to</span><span style="color:#9a9788">:</span> <span style="color:#bd976a">RouteLocationRaw</span><span style="color:#666666">)</span><span style="color:#9a9788">:</span> <span style="color:#b8a965">Promise</span><span style="color:#666666">&lt;</span><span style="color:#cb7676">void</span> <span style="color:#cb7676">|</span></div>
<div class="cl" style="left:523px;top:1107.5px"><span style="color:#bd976a">NavigationFailure</span> <span style="color:#cb7676">|</span> <span style="color:#cb7676">undefined</span><span style="color:#666666">&gt;</span></div>
<div class="t" style="left:523px;top:1165px;font-size:27.34px;color:#cdc9b9">Programmatically navigate to a new URL by replacing the current entry in the history stack.</div>
<div class="t" style="left:523px;top:1221px;font-size:25.8px;color:#cdc9b9;font-style:italic">@param</div>
<div class="t m" style="left:640.5px;top:1222px;font-size:25px;color:#cdc9b9">to</div>
<div class="t" style="left:689px;top:1221px;font-size:26.9px;color:#cdc9b9">— Route location to navigate to</div>
<div class="abs" style="left:2162px;top:118px;width:2px;height:1323px;background:#191919"></div>
<div class="abs" style="left:2164px;top:118px;width:639px;height:1323px;background:#121212"></div>
<div class="t" style="left:2204.5px;top:134px;font-size:22px;letter-spacing:-1px;color:#cfcbbc">EXPLORER</div>
<div class="hd" style="left:2204.5px;top:188.5px;font-size:22.15px">OPEN EDITORS</div>
<div class="abs" style="left:2164px;top:232px;width:639px;height:45px;background:#191919"></div>
<div class="t" style="left:2292.5px;top:234.5px;font-size:26.45px;font-style:italic;color:#dad6c8">NotFound.vue</div>
<div class="t" style="left:2472px;top:236px;font-size:24.8px;font-style:italic;color:#bdb9ab">components</div>
<div class="hd" style="left:2204.5px;top:278px;font-size:22.2px;letter-spacing:0.75px">NUXT.COM</div>
<div class="rt" style="left:2276.0px;top:330px;color:#555">.nuxt</div>
<div class="rt" style="left:2276.0px;top:374px;color:#cdc9b9">app</div>
<div class="rt" style="left:2276.0px;top:418px;color:#cdc9b9">assets</div>
<div class="rt" style="left:2276.0px;top:462px;color:#5d94c7">components</div>
<div class="rt" style="left:2296.5px;top:506px;color:#cdc9b9">agencies</div>
<div class="rt" style="left:2296.5px;top:550px;color:#cdc9b9">blog</div>
<div class="rt" style="left:2296.5px;top:594px;color:#5d94c7">content</div>
<div class="rt" style="left:2296.5px;top:638px;color:#cdc9b9">docs</div>
<div class="rt" style="left:2296.5px;top:682px;color:#cdc9b9">icons</div>
<div class="rt" style="left:2296.5px;top:726px;color:#cdc9b9">showcases</div>
<div class="rt" style="left:2296.5px;top:770px;color:#cdc9b9">ui</div>
<div class="rt" style="left:2296.5px;top:814px;color:#cdc9b9">CardListItem.vue</div>
<div class="rt" style="left:2296.5px;top:858px;color:#cdc9b9">CategoriesAside.vue</div>
<div class="rt" style="left:2296.5px;top:902px;color:#cdc9b9">Footer.vue</div>
<div class="rt" style="left:2296.5px;top:946px;color:#cdc9b9">Navbar.vue</div>
<div class="rt" style="left:2296.5px;top:990px;color:#cdc9b9">NavbarDialog.vue</div>
<div class="abs" style="left:2164px;top:1034px;width:639px;height:44px;background:#191919"></div>
<div class="rt" style="left:2296.5px;top:1034px;color:#cdc9b9">NotFound.vue</div>
<div class="rt" style="left:2296.5px;top:1078px;color:#cdc9b9">NuxtLoadingBar.vue</div>
<div class="rt" style="left:2296.5px;top:1122px;color:#cdc9b9">Page.vue</div>
<div class="rt" style="left:2296.5px;top:1166px;color:#cdc9b9">PageError.vue</div>
<div class="rt" style="left:2296.5px;top:1210px;color:#cdc9b9">PageList.vue</div>
<div class="rt" style="left:2296.5px;top:1254px;color:#cdc9b9">SocialLinks.vue</div>
<div class="abs" style="left:2204px;top:506px;width:2px;height:802px;background:#2f3b49"></div>
<div class="abs" style="left:2752px;top:476px;width:15px;height:15px;border-radius:8px;background:#33465a"></div>
<div class="abs" style="left:2752px;top:608px;width:15px;height:15px;border-radius:8px;background:#33465a"></div>
<div class="abs" style="left:2164px;top:1309px;width:639px;height:1px;background:#1f1f1f"></div>
<div class="hd" style="left:2204.5px;top:1310px;font-size:22.56px">OUTLINE</div>
<div class="abs" style="left:2164px;top:1353px;width:639px;height:1px;background:#1f1f1f"></div>
<div class="hd" style="left:2204.5px;top:1354px;font-size:22.60px">TIMELINE</div>
<div class="abs" style="left:2164px;top:1397px;width:639px;height:1px;background:#1f1f1f"></div>
<div class="hd" style="left:2204.5px;top:1398px;font-size:22.68px">NPM SCRIPTS</div>
<div class="abs" style="left:2803px;top:118px;width:1px;height:1323px;background:#1f1f1f"></div>
<div class="abs" style="left:2894px;top:188px;width:4px;height:96px;background:#4d9375"></div>
<div class="abs" style="left:254px;top:1440px;width:2646px;height:1px;background:#1f1f1f"></div>
<div class="abs" style="left:254px;top:1441px;width:2646px;height:45px;background:#121212"></div>
<div class="sb" style="left:320.5px;font-size:25.10px;color:#e9a800">Nuxt.com</div>
<div class="sb" style="left:495.0px;font-size:24.64px">main*</div>
<div class="sb" style="left:628.0px;font-size:25.00px">21</div>
<div class="sb" style="left:683.3px;font-size:25.00px">0</div>
<div class="sb" style="left:1564.7px;font-size:25.25px">Florent Delerue, 2 months ago</div>
<div class="sb" style="left:1939.4px;font-size:24.62px">Spaces: 2</div>
<div class="sb" style="left:2081.5px;font-size:25.00px;color:#c9c5b6;letter-spacing:3.5px">{}</div>
<div class="sb" style="left:2119.6px;font-size:25.00px">Vue</div>
<div class="sb" style="left:2194.0px;font-size:25.70px">4.9.5 (takeover)</div>
<div class="sb" style="left:2408.0px;font-size:26.00px">tsconfig.json</div>
<div class="sb" style="left:2586.5px;font-size:25.23px">&lt;TagName prop-name /&gt;</div>
</div></div>
<svg class="abs" style="left:0;top:0" width="3052" height="1674" viewBox="0 0 3052 1674">
<path d="M205.5 166.5 L197.0 153.5 L182.0 180.0 L193.0 180.0 Q200.5 180.0 204.5 173.0 L212.5 159.0 L224.5 180.0 L208.5 180.0" fill="none" stroke="#00dc82" stroke-width="5.7" stroke-linejoin="round" stroke-linecap="round"/>
<g fill="none" stroke="#888888" stroke-width="2.4" stroke-linecap="butt" stroke-linejoin="round">
<circle cx="203" cy="261" r="16.3"/>
<path d="M198.6 259.8 H203.6 V269 M198 269.6 H208.6" stroke-width="2.8"/><circle cx="203" cy="253" r="1.9" fill="#888888" stroke="none"/>
<rect x="185.5" y="327.3" width="10" height="7.4" rx="1.5"/><rect x="211.2" y="327.3" width="9.6" height="7.4" rx="1.5"/><rect x="211.2" y="341.2" width="9.6" height="7.2" rx="1.5"/><rect x="211.2" y="355" width="9.6" height="7.4" rx="1.5"/>
<path d="M195.5 331 H211.2 M203 331 V356 Q203 358.7 205.7 358.7 H211.2 M203 344.8 H211.2"/>
<polygon points="202.8,412.6 196.2,416.4 196.2,424.0 202.8,427.8 209.4,424.0 209.4,416.4"/><polygon points="192.8,430.1 186.2,433.9 186.2,441.5 192.8,445.3 199.4,441.5 199.4,433.9"/><polygon points="212.8,430.1 206.2,433.9 206.2,441.5 212.8,445.3 219.4,441.5 219.4,433.9"/>
<path d="M198.5 497 A16.3 16.3 0 0 0 190.3 523.5"/><path d="M216.2 503.2 A16.3 16.3 0 0 1 207.5 528.8"/>
<path d="M212.3 497.5 Q204.5 497.5 202.6 503 Q201.2 507 198.3 508.6 L194 511.5 L198.6 515 Q200.2 520.5 197.8 523.6 L194 526.4 V528.4 Q204 529.4 206.8 521.6 Q207.4 518 208 515.4 L212.4 512 L208.6 508.4 Q209 502.5 212.3 500.6 Z" stroke-width="2.2"/>
<path d="M186.6 590.5 V580.8 H197 M209 580.8 H219.4 V590.5 M219.4 603.5 V613.2 H209 M197 613.2 H186.6 V603.5"/>
<path d="M203 584 L214.5 590.4 V603.4 L203 609.6 L191.5 603.4 V590.4 Z M191.5 590.4 L203 597 L214.5 590.4 M203 597 V609.6"/>
<path d="M197.8 663 V671.4 M208 663 V671.4 M193.4 672.6 H212.6 V680 Q212.6 689.6 203 689.6 Q193.4 689.6 193.4 680 Z M203 689.6 V698.4"/>
<path d="M203.6 781.6 L199.6 781.6 L198.6 776.6 L195.4 775.3 L191.2 778.2 L188 775 L190.8 770.8 L189.5 767.8 L186.8 767.2 L186.8 761.8 L189.6 761.2 L190.8 758.2 L188 754 L191.6 750.6 L195.8 753.4 L198.8 752.2 L199.8 748.2 L206.2 748.2 L207.2 752.2 L210.2 753.4 L214.4 750.6 L218 754 L215.6 757.6 L216.6 760"/>
<path d="M199.6 772.4 A8 8 0 1 1 210.8 764"/>
<rect x="205.2" y="773" width="9" height="8.6"/><path d="M210.8 767.2 H219.4 V775.8"/>
<circle cx="193.5" cy="840.6" r="5.6"/><circle cx="193.5" cy="858.2" r="5.6"/><circle cx="212.4" cy="858.2" r="5.6"/>
<path d="M208.4 837 H213.4 V846.4 M208 846.8 H218" stroke-width="2.8"/>
<path d="M186.6 940.6 V919 Q186.6 917 188.6 917 H210.6"/><rect x="193" y="923" width="27" height="26.4" rx="2.4"/><circle cx="209.2" cy="930.4" r="3"/>
<path d="M193.4 939.4 L199 933.8 L208 942.2 L212 938.6 L220 947"/>
<path d="M198.4 1009 V1002.8 H218.4 V1022 H202"/><path d="M204.4 1011.8 H188.2 V1032 H208.4 V1026"/><circle cx="208" cy="1011.8" r="3"/><circle cx="198" cy="1022" r="3"/><path d="M218.4 1011.8 H223 M183 1022 H188.2"/>
<rect x="191.6" y="1086" width="22.8" height="30.2" rx="2.4"/><path d="M191.6 1095.8 H214.4 M191.6 1106 H214.4"/>
<g fill="#888888" stroke="none"><circle cx="196.8" cy="1091" r="1.6"/><circle cx="196.8" cy="1101" r="1.6"/><circle cx="196.8" cy="1111" r="1.6"/></g>
<rect x="189.8" y="1171.6" width="26.6" height="26.8" rx="3"/><path d="M189.8 1177.4 H216.4"/><path d="M197 1184.6 L202.6 1188.8 L197 1193" stroke-width="3"/>
<rect x="188" y="1254" width="30" height="30" stroke-dasharray="2.6 2.4" stroke-dashoffset="1.3" stroke-width="2.6"/><path d="M193 1262.6 H205.6 M193 1269 H200.8"/>
<path d="M188.4 1341.6 A13 13 0 1 1 188.4 1359.4"/><path d="M210 1360.4 L219.6 1369.6"/>
<path d="M185.6 1345.4 H187.6 M190.6 1345.4 H200.8 M185.6 1350.5 H196.4 M198.6 1350.5 H200.8 M185.6 1355.6 H187.6 M190.6 1355.6 H200.8" stroke-width="2.8"/>
</g>
<path d="M210.1 1420 L219.7 1424.7 V1449 L210.9 1453.6 L208.6 1452.4 L196.3 1441 L189.5 1445.2 Q187.4 1445.6 186.4 1442.4 L191 1436.8 L186.4 1431.2 Q187.4 1428 189.5 1428 L196 1432.6 Z M210.9 1429.9 V1443.8 L200.9 1436.4 Z" fill="#00b06b" fill-rule="evenodd" stroke="#00b06b" stroke-width="1.2" stroke-linejoin="round"/>
<path d="M273.5 145.3 L290.1 161.9 M290.1 145.3 L273.5 161.9" stroke="#d6d2c4" stroke-width="2.0"/>
<path d="M310.8 141.3 L323.0 161.8 L335.2 141.3" fill="none" stroke="#b0cc88" stroke-width="2.2" stroke-linejoin="miter"/><path d="M316.3 141.0 L323.0 145.3 L329.7 141.0 L323.0 153.9 Z" fill="#b0cc88"/>
<g fill="none" stroke="#c6c6c6" stroke-width="2.2" stroke-linejoin="round">
<circle cx="1908" cy="153" r="13"/><path d="M1906.8 146 V160.4 M1907.4 146.4 L1913.6 152.6" stroke-width="2"/>
<g fill="#c6c6c6" stroke="none"><circle cx="1906.8" cy="145.6" r="2.9"/><circle cx="1906.8" cy="160.4" r="2.9"/><circle cx="1913.8" cy="152.8" r="2.6"/></g>
<path d="M1951.2 142.8 L1968.6 153.8 L1951.2 164.8 Z"/>
<rect x="1999" y="140" width="24" height="24" rx="1"/><path d="M2004.4 152 H2017.6 M2011 145.4 V158.6"/>
<rect x="2053" y="140" width="24" height="24" rx="3"/><path d="M2065 140 V164"/>
</g>
<g fill="#c6c6c6"><circle cx="2106" cy="153.2" r="2.2"/><circle cx="2116" cy="153.2" r="2.2"/><circle cx="2126" cy="153.2" r="2.2"/></g>
<path d="M447.7 202.4 L457.7 211.0 L447.7 219.6" fill="none" stroke="#8f99a4" stroke-width="2.0"/>
<path d="M469.3 199.3 L481.5 219.8 L493.7 199.3" fill="none" stroke="#b0cc88" stroke-width="2.2" stroke-linejoin="miter"/><path d="M474.8 199.0 L481.5 203.3 L488.2 199.0 L481.5 211.9 Z" fill="#b0cc88"/>
<path d="M693.0 202.4 L703.0 211.0 L693.0 219.6" fill="none" stroke="#8f99a4" stroke-width="2.0"/>
<g fill="#c5c1b2"><circle cx="2745.6" cy="153.3" r="2.1"/><circle cx="2756.1" cy="153.3" r="2.1"/><circle cx="2766.6" cy="153.3" r="2.1"/></g>
<path d="M2174.1 206.2 L2183.8 216.6 L2193.5 206.2" fill="none" stroke="#d0d0d0" stroke-width="1.9"/>
<path d="M2219.9 246.1 L2236.5 262.7 M2236.5 246.1 L2219.9 262.7" stroke="#d6d2c4" stroke-width="2.0"/>
<path d="M2249.4 242.9 L2261.6 263.4 L2273.8 242.9" fill="none" stroke="#b0cc88" stroke-width="2.2" stroke-linejoin="miter"/><path d="M2254.9 242.6 L2261.6 246.9 L2268.3 242.6 L2261.6 255.5 Z" fill="#b0cc88"/>
<path d="M2174.1 295.8 L2183.8 306.2 L2193.5 295.8" fill="none" stroke="#d0d0d0" stroke-width="1.9"/>
<path d="M2284 322 Q2290.5 326.2 2297 322" fill="none" stroke="#9a978a" stroke-width="2"/>
<path d="M2205.6 342.3 L2216.0 352.0 L2205.6 361.7" fill="none" stroke="#d0d0d0" stroke-width="1.9"/>
<path d="M2231.8 360.8 v-19 q0 -1 1 -1 h8.6 q1 0 1.3 1 l0.6 2.4 h11 q1 0 1 1 v15.6 z" fill="#cdcdcd"/><rect x="2233.8" y="342.8" width="7.6" height="1.6" fill="#3a3a3a"/>
<path d="M2205.6 386.3 L2216.0 396.0 L2205.6 405.7" fill="none" stroke="#d0d0d0" stroke-width="1.9"/>
<path d="M2231.8 404.8 v-19 q0 -1 1 -1 h8.6 q1 0 1.3 1 l0.6 2.4 h11 q1 0 1 1 v15.6 z" fill="#cdcdcd"/><rect x="2233.8" y="386.8" width="7.6" height="1.6" fill="#3a3a3a"/>
<path d="M2205.6 430.3 L2216.0 440.0 L2205.6 449.7" fill="none" stroke="#d0d0d0" stroke-width="1.9"/>
<path d="M2231.8 448.8 v-19 q0 -1 1 -1 h8.6 q1 0 1.3 1 l0.6 2.4 h11 q1 0 1 1 v15.6 z" fill="#cdcdcd"/><rect x="2233.8" y="430.8" width="7.6" height="1.6" fill="#3a3a3a"/>
<path d="M2200.9 479.8 L2210.6 490.2 L2220.3 479.8" fill="none" stroke="#d0d0d0" stroke-width="1.9"/>
<path d="M2231.8 492.8 v-19 q0 -1 1 -1 h8.6 q1 0 1.3 1 l0.6 2.4 h11 q1 0 1 1 v15.6 z" fill="#cdcdcd"/><rect x="2233.8" y="474.8" width="7.6" height="1.6" fill="#3a3a3a"/>
<path d="M2225.6 518.3 L2236.0 528.0 L2225.6 537.7" fill="none" stroke="#d0d0d0" stroke-width="1.9"/>
<path d="M2251.7 536.8 v-19 q0 -1 1 -1 h8.6 q1 0 1.3 1 l0.6 2.4 h11 q1 0 1 1 v15.6 z" fill="#cdcdcd"/><rect x="2253.7" y="518.8" width="7.6" height="1.6" fill="#3a3a3a"/>
<path d="M2225.6 562.3 L2236.0 572.0 L2225.6 581.7" fill="none" stroke="#d0d0d0" stroke-width="1.9"/>
<path d="M2251.7 580.8 v-19 q0 -1 1 -1 h8.6 q1 0 1.3 1 l0.6 2.4 h11 q1 0 1 1 v15.6 z" fill="#cdcdcd"/><rect x="2253.7" y="562.8" width="7.6" height="1.6" fill="#3a3a3a"/>
<path d="M2225.6 606.3 L2236.0 616.0 L2225.6 625.7" fill="none" stroke="#d0d0d0" stroke-width="1.9"/>
<path d="M2251.7 624.8 v-19 q0 -1 1 -1 h8.6 q1 0 1.3 1 l0.6 2.4 h11 q1 0 1 1 v15.6 z" fill="#cdcdcd"/><rect x="2253.7" y="606.8" width="7.6" height="1.6" fill="#3a3a3a"/>
<path d="M2225.6 650.3 L2236.0 660.0 L2225.6 669.7" fill="none" stroke="#d0d0d0" stroke-width="1.9"/>
<path d="M2251.7 668.8 v-19 q0 -1 1 -1 h8.6 q1 0 1.3 1 l0.6 2.4 h11 q1 0 1 1 v15.6 z" fill="#cdcdcd"/><rect x="2253.7" y="650.8" width="7.6" height="1.6" fill="#3a3a3a"/>
<path d="M2225.6 694.3 L2236.0 704.0 L2225.6 713.7" fill="none" stroke="#d0d0d0" stroke-width="1.9"/>
<path d="M2251.7 712.8 v-19 q0 -1 1 -1 h8.6 q1 0 1.3 1 l0.6 2.4 h11 q1 0 1 1 v15.6 z" fill="#cdcdcd"/><rect x="2253.7" y="694.8" width="7.6" height="1.6" fill="#3a3a3a"/>
<path d="M2225.6 738.3 L2236.0 748.0 L2225.6 757.7" fill="none" stroke="#d0d0d0" stroke-width="1.9"/>
<path d="M2251.7 756.8 v-19 q0 -1 1 -1 h8.6 q1 0 1.3 1 l0.6 2.4 h11 q1 0 1 1 v15.6 z" fill="#cdcdcd"/><rect x="2253.7" y="738.8" width="7.6" height="1.6" fill="#3a3a3a"/>
<path d="M2225.6 782.3 L2236.0 792.0 L2225.6 801.7" fill="none" stroke="#d0d0d0" stroke-width="1.9"/>
<path d="M2251.7 800.8 v-19 q0 -1 1 -1 h8.6 q1 0 1.3 1 l0.6 2.4 h11 q1 0 1 1 v15.6 z" fill="#cdcdcd"/><rect x="2253.7" y="782.8" width="7.6" height="1.6" fill="#3a3a3a"/>
<path d="M2252.8 824.3 L2265.0 844.8 L2277.2 824.3" fill="none" stroke="#b0cc88" stroke-width="2.2" stroke-linejoin="miter"/><path d="M2258.3 824.0 L2265.0 828.3 L2271.7 824.0 L2265.0 836.9 Z" fill="#b0cc88"/>
<path d="M2252.8 868.3 L2265.0 888.8 L2277.2 868.3" fill="none" stroke="#b0cc88" stroke-width="2.2" stroke-linejoin="miter"/><path d="M2258.3 868.0 L2265.0 872.3 L2271.7 868.0 L2265.0 880.9 Z" fill="#b0cc88"/>
<path d="M2252.8 912.3 L2265.0 932.8 L2277.2 912.3" fill="none" stroke="#b0cc88" stroke-width="2.2" stroke-linejoin="miter"/><path d="M2258.3 912.0 L2265.0 916.3 L2271.7 912.0 L2265.0 924.9 Z" fill="#b0cc88"/>
<path d="M2252.8 956.3 L2265.0 976.8 L2277.2 956.3" fill="none" stroke="#b0cc88" stroke-width="2.2" stroke-linejoin="miter"/><path d="M2258.3 956.0 L2265.0 960.3 L2271.7 956.0 L2265.0 968.9 Z" fill="#b0cc88"/>
<path d="M2252.8 1000.3 L2265.0 1020.8 L2277.2 1000.3" fill="none" stroke="#b0cc88" stroke-width="2.2" stroke-linejoin="miter"/><path d="M2258.3 1000.0 L2265.0 1004.3 L2271.7 1000.0 L2265.0 1012.9 Z" fill="#b0cc88"/>
<path d="M2252.8 1044.3 L2265.0 1064.8 L2277.2 1044.3" fill="none" stroke="#b0cc88" stroke-width="2.2" stroke-linejoin="miter"/><path d="M2258.3 1044.0 L2265.0 1048.3 L2271.7 1044.0 L2265.0 1056.9 Z" fill="#b0cc88"/>
<path d="M2252.8 1088.3 L2265.0 1108.8 L2277.2 1088.3" fill="none" stroke="#b0cc88" stroke-width="2.2" stroke-linejoin="miter"/><path d="M2258.3 1088.0 L2265.0 1092.3 L2271.7 1088.0 L2265.0 1100.9 Z" fill="#b0cc88"/>
<path d="M2252.8 1132.3 L2265.0 1152.8 L2277.2 1132.3" fill="none" stroke="#b0cc88" stroke-width="2.2" stroke-linejoin="miter"/><path d="M2258.3 1132.0 L2265.0 1136.3 L2271.7 1132.0 L2265.0 1144.9 Z" fill="#b0cc88"/>
<path d="M2252.8 1176.3 L2265.0 1196.8 L2277.2 1176.3" fill="none" stroke="#b0cc88" stroke-width="2.2" stroke-linejoin="miter"/><path d="M2258.3 1176.0 L2265.0 1180.3 L2271.7 1176.0 L2265.0 1188.9 Z" fill="#b0cc88"/>
<path d="M2252.8 1220.3 L2265.0 1240.8 L2277.2 1220.3" fill="none" stroke="#b0cc88" stroke-width="2.2" stroke-linejoin="miter"/><path d="M2258.3 1220.0 L2265.0 1224.3 L2271.7 1220.0 L2265.0 1232.9 Z" fill="#b0cc88"/>
<path d="M2252.8 1264.3 L2265.0 1284.8 L2277.2 1264.3" fill="none" stroke="#b0cc88" stroke-width="2.2" stroke-linejoin="miter"/><path d="M2258.3 1264.0 L2265.0 1268.3 L2271.7 1264.0 L2265.0 1276.9 Z" fill="#b0cc88"/>
<path d="M2180.0 1321.9 L2190.4 1331.6 L2180.0 1341.3" fill="none" stroke="#d0d0d0" stroke-width="1.9"/>
<path d="M2180.0 1365.8 L2190.4 1375.5 L2180.0 1385.2" fill="none" stroke="#d0d0d0" stroke-width="1.9"/>
<path d="M2180.0 1409.8 L2190.4 1419.5 L2180.0 1429.2" fill="none" stroke="#d0d0d0" stroke-width="1.9"/>
<rect x="2834" y="145" width="32" height="2" fill="#626262"/>
<rect x="2834" y="153" width="32" height="2" fill="#626262"/>
<rect x="2834" y="161" width="32" height="2" fill="#626262"/>
<g fill="none" stroke="#d6d2c2" stroke-width="3" stroke-linejoin="round">
<path d="M2842 224.6 H2832.6 Q2829.6 224.6 2829.6 227.6 V254.8 Q2829.6 257.8 2832.6 257.8 H2853 Q2856 257.8 2856 254.8 V247.6"/>
<path d="M2845 213.6 H2859.4 L2868.2 222.4 V242.6 Q2868.2 245.6 2865.2 245.6 H2845 Q2842 245.6 2842 242.6 V216.6 Q2842 213.6 2845 213.6 Z"/><path d="M2859.4 213.6 V222.4 H2868.2" fill="#d6d2c2"/>
</g>
<g fill="none" stroke="#55524f" stroke-width="3" stroke-linejoin="round">
<circle cx="2856.4" cy="324.4" r="14.6"/><path d="M2845.6 336 L2829 354.4"/>
<circle cx="2839.6" cy="411" r="6"/><circle cx="2860.4" cy="419.6" r="6"/><circle cx="2839.6" cy="444" r="6"/><path d="M2839.6 417 V438 M2860.4 425.6 Q2860.4 432 2852 432 H2846 Q2839.8 432 2839.8 438"/>
<path d="M2842.6 522 V500.8 L2872.4 520.6 L2853.4 533.2"/>
<path d="M2830.8 531.4 A7.4 7.4 0 0 1 2845.6 531.4 V538.6 A7.4 7.4 0 0 1 2830.8 538.6 Z M2830.8 530.6 H2845.6 M2826.4 536.4 H2830.8 M2845.6 536.4 H2850 M2831.4 529.2 L2827 525.2 M2845 529.2 L2849.4 525.2 M2831.8 543 L2827 547.4 M2844.6 543 L2849.4 547.4" stroke-width="2.6"/>
<circle cx="2850" cy="620" r="22.4"/>
<path d="M2827.8 720.4 H2864 M2845.6 703.2 V738 M2827.8 706.2 Q2827.8 703.2 2830.8 703.2 H2842.6 Q2845.6 703.2 2845.6 706.2 V720.4 H2860 Q2863 720.4 2863 723.4 V735 Q2863 738 2860 738 H2830.8 Q2827.8 738 2827.8 735 Z"/><rect x="2855.4" y="694.2" width="16.6" height="16.6" rx="3"/>
<path d="M2828 819 Q2829.4 797.6 2856.8 797.2 V790.4 L2872 803 L2856.8 815.8 V808.6 Q2838 807.6 2828 819 Z"/><circle cx="2846.2" cy="826.8" r="7.4"/>
<circle cx="2851.4" cy="908.4" r="10.6"/><path d="M2851.4 885 V897.8 M2851.4 919 V931.4"/>
<circle cx="2850" cy="1295.6" r="22.4"/><circle cx="2850" cy="1291" r="9.6"/><path d="M2835 1312 Q2838 1301.6 2850 1300.6 Q2862 1301.6 2865 1312"/>
</g>
<path d="M2843.4 642 V630.4 Q2838.6 631.4 2836.4 628 Q2835.4 625.6 2833.2 625.2 Q2836.2 624.2 2838 627 Q2840.4 629.8 2843.6 628.4 Q2837 624 2837.6 614.4 Q2837.8 609.8 2840.4 607.6 Q2839.6 603.6 2841 601 Q2844.2 601.4 2846.4 603.6 Q2850 602.8 2853.6 603.6 Q2855.8 601.4 2859 601 Q2860.4 603.6 2859.6 607.6 Q2862.2 609.8 2862.4 614.4 Q2863 624 2856.4 628.4 Q2856.8 630 2856.6 642 Z" fill="#55524f"/>
<path d="M2846.4 1377.0 L2846.6 1369.3 L2853.4 1369.3 L2853.6 1377.0 L2858.0 1378.9 L2863.7 1373.5 L2868.5 1378.3 L2863.1 1384.0 L2865.0 1388.4 L2872.7 1388.6 L2872.7 1395.4 L2865.0 1395.6 L2863.1 1400.0 L2868.5 1405.7 L2863.7 1410.5 L2858.0 1405.1 L2853.6 1407.0 L2853.4 1414.7 L2846.6 1414.7 L2846.4 1407.0 L2842.0 1405.1 L2836.3 1410.5 L2831.5 1405.7 L2836.9 1400.0 L2835.0 1395.6 L2827.3 1395.4 L2827.3 1388.6 L2835.0 1388.4 L2836.9 1384.0 L2831.5 1378.3 L2836.3 1373.5 L2842.0 1378.9 Z" fill="none" stroke="#55524f" stroke-width="3.0" stroke-linejoin="round"/><circle cx="2850.0" cy="1392.0" r="5.6" fill="none" stroke="#55524f" stroke-width="3.0"/>
<circle cx="2866" cy="443.6" r="15.8" fill="#c4bfae"/><circle cx="2866" cy="1312" r="15.8" fill="#c4bfae"/>
<text x="2866" y="451.6" font-family="Liberation Sans" font-size="22" text-anchor="middle" fill="#121212">5</text><text x="2866" y="1320" font-family="Liberation Sans" font-size="22" text-anchor="middle" fill="#121212">1</text>
<path d="M287.6 1470.6 V1455.4 Q287.6 1453.4 289.6 1453.4 H295.6 L298.4 1456.6 H305.8 Q307.8 1456.6 307.8 1458.6 V1460.8 M287.6 1470.6 L291.8 1461.8 Q292.4 1460.8 293.6 1460.8 H309 Q310.6 1460.8 309.8 1462.4 L306.4 1469.6 Q306 1470.6 304.6 1470.6 Z" fill="none" stroke="#e9a800" stroke-width="2.2" stroke-linejoin="round"/>
<g fill="none" stroke="#c9c5b6" stroke-width="2.2" stroke-linejoin="round">
<circle cx="467" cy="1454" r="3.6"/><circle cx="467" cy="1470.6" r="3.6"/><circle cx="478.8" cy="1458" r="3.6"/><path d="M467 1457.6 V1467 M478.8 1461.6 Q478.8 1465 474 1465.4 Q467.4 1466 467 1467"/>
<path d="M595.6 1458.2 A10.4 10.4 0 0 1 614.8 1458.6 M614.6 1466 A10.4 10.4 0 0 1 595.4 1465.4"/><path d="M611 1459.6 H616.4 V1454.2 M599 1464.4 H593.6 V1469.8"/>
<circle cx="753.6" cy="1453.4" r="3.2"/><circle cx="753.6" cy="1470" r="3.2"/><circle cx="767.2" cy="1459.8" r="3.2"/><path d="M753.6 1456.6 V1466.8 M760.6 1449.6 V1475.4 M767.2 1463 Q767.2 1468 761 1468.6" stroke-width="2"/>
<path d="M665.6 1453.6 V1470.6 M659 1464.2 L665.6 1470.8 L672.2 1464.2 M706.3 1471.8 V1454.6 M699.7 1461.2 L706.3 1454.6 L712.9 1461.2"/>
<circle cx="1543.6" cy="1461.8" r="5.6"/><path d="M1543.6 1448.6 V1456 M1543.6 1467.6 V1475"/>
</g>
</svg>
<div class="abs" style="left:132px;top:96px;width:2788px;height:1409px;overflow:hidden;border-radius:14px"><div class="abs" style="left:1344px;top:1360px;width:80px;height:80px;border-radius:40px;background:rgba(11,11,11,0.84);border:2px solid #262626"></div></div>
<svg class="abs" style="left:1470px;top:1450px" width="100" height="60" viewBox="1470 1450 100 60"><path d="M1518.2 1482.7 L1511.1 1471.9 L1498.7 1493.9 L1507.8 1493.9 Q1514.0 1493.9 1517.4 1488.1 L1524.0 1476.4 L1534.0 1493.9 L1520.7 1493.9" fill="none" stroke="#0cb877" stroke-width="4.7" stroke-linejoin="round" stroke-linecap="round"/></svg>
</body></html>
